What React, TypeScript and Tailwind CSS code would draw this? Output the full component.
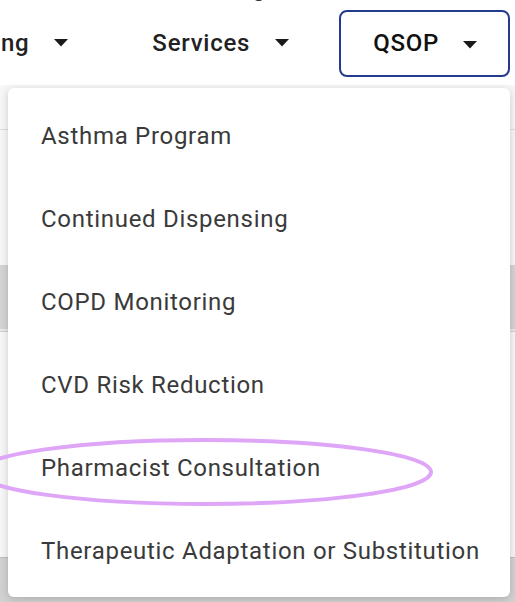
import React from "react";

const items = [
  "Asthma Program",
  "Continued Dispensing",
  "COPD Monitoring",
  "CVD Risk Reduction",
  "Pharmacist Consultation",
  "Therapeutic Adaptation or Substitution",
];

function Caret() {
  return (
    <svg width="14" height="8" viewBox="0 0 14 8" className="shrink-0">
      <path d="M0 0 L14 0 L7 7.5 Z" fill="#1a1a1a" />
    </svg>
  );
}

export default function App() {
  return (
    <div
      className="relative w-[515px] h-[602px] overflow-hidden bg-white"
      style={{ fontFamily: "Roboto, 'Liberation Sans', sans-serif" }}
    >
      {/* tail of the heading above, mostly scrolled out */}
      <span className="absolute left-[252px] -top-[27px] text-[24px] text-[#333] leading-[30px]">g</span>

      {/* Nav row */}
      <div className="flex items-center h-[85px] text-[24px] font-medium text-[#222] tracking-[0.75px]">
        <div className="flex items-center -ml-[64px]">
          <span>Training</span>
          <span className="ml-[25px]">
            <Caret />
          </span>
        </div>
        <div className="flex items-center ml-[84px]">
          <span>Services</span>
          <span className="ml-[25px]">
            <Caret />
          </span>
        </div>
        <button className="flex items-center ml-[50px] mt-[1px] w-[171px] h-[67px] pl-[32px] border-2 border-[#243a8c] rounded-lg bg-white">
          <span className="text-[#111]">QSOP</span>
          <span className="ml-[24px] mt-[4px]">
            <Caret />
          </span>
        </button>
      </div>

      {/* Page underneath */}
      <div className="bg-[#f7f7f7] h-full">
        <div className="h-[45px] border-b border-[#dedede]" />
        <div className="h-[135px]" />
        <div className="h-[64px] bg-[#d4d4d4]" />
        <div className="h-[2px] bg-[#eaeaea]" />
        <div className="h-[226px] border-t border-[#cfcfcf]" />
        <div className="h-[60px] bg-[#d2d2d2] border-t border-[#bdbdbd]" />
      </div>

      {/* Dropdown menu */}
      <div className="absolute left-[8px] top-[88px] w-[502px] h-[509px] bg-white rounded-md shadow-[0_2px_8px_rgba(0,0,0,0.18)] py-[6px]">
        {items.map((item) => (
          <div
            key={item}
            className="flex items-center h-[83px] pl-[33px] text-[24px] text-[#3a3a3a] tracking-[0.7px] whitespace-nowrap"
          >
            {item}
          </div>
        ))}
      </div>

      {/* Highlight annotation */}
      <svg className="absolute left-0 top-0 pointer-events-none" width="515" height="602">
        <ellipse cx="205" cy="472" rx="226" ry="32" fill="none" stroke="#dfa6f7" strokeWidth="4" />
      </svg>
    </div>
  );
}
